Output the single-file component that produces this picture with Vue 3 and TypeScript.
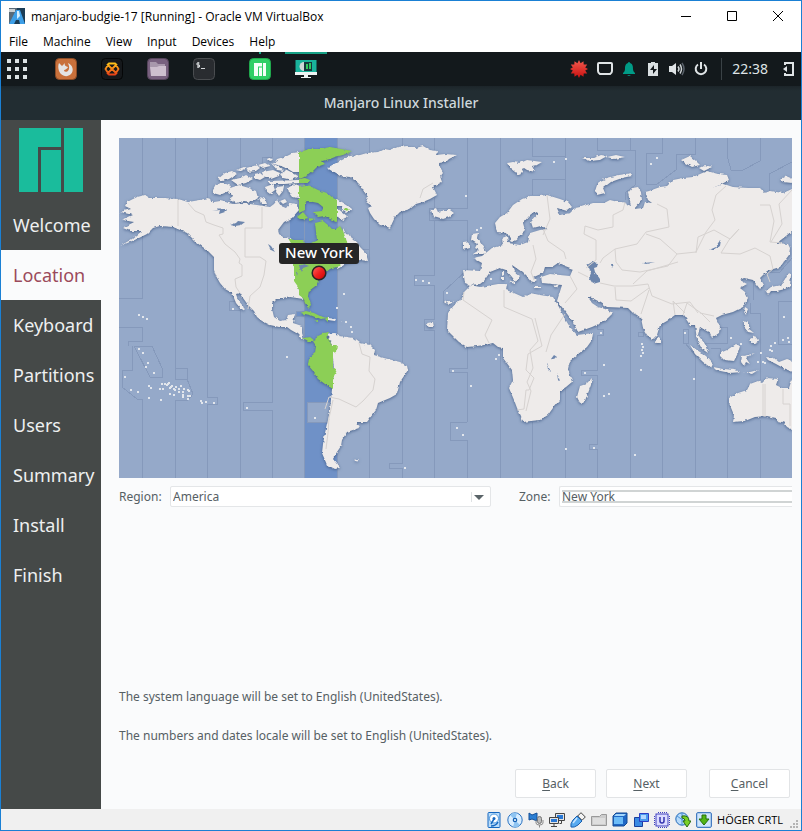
<script setup lang="ts">
import { ref } from 'vue'

interface Dot { x: number; y: number }

const menus: string[] = ['File', 'Machine', 'View', 'Input', 'Devices', 'Help']
const steps: string[] = ['Welcome', 'Location', 'Keyboard', 'Partitions', 'Users', 'Summary', 'Install', 'Finish']
const current = ref('Location')
const region = ref('America')
const zone = ref('New York')

// Map geometry, in the coordinate space of the map's viewBox.
const land: string[] = [
  // North America
  '120,212 131,209 125,206 127,202 137,197 145,195 150,198 163,198 178,199 188,202 200,200 208,198 214,202 220,201 233,204 243,203 257,205 270,207 274,204 277,200 281,206 286,208 290,203 296,204 299,210 292,218 284,222 278,230 279,234 283,237 291,238 296,262 299,290 303,299 297,298 290,297 283,299 276,299 272,303 272,309 274,317 280,321 286,320 288,315 295,314 293,323 302,326 302,333 304,340 298,334 291,330 287,327 279,327 270,325 262,321 257,317 254,311 248,305 243,298 240,293 236,294 238,300 243,306 245,311 240,308 236,303 232,293 225,289 220,283 216,276 214,270 214,257 207,250 197,243 187,233 173,227 160,226 153,228 147,234 137,239 120,246 132,239 142,231 130,231 123,228 134,222 122,220 133,215',
  '343,228 346,234 350,235 353,240 357,242 360,247 366,253 368,261 360,260 355,262 347,263 341,267 337,269 336,262 345,258',
  // Arctic islands
  '299,152 293,153 287,156 277,159 274,164 281,166 288,169 293,172 299,172',
  '268,158 273,159 271,161 267,160', '258,165 265,163 270,166 263,168',
  '218,179 225,173 232,171 237,174 229,179 222,181', '236,170 244,167 247,168 240,171',
  '231,180 240,178 246,175 253,179 246,183 238,185', '246,168 257,165 260,168 256,171 248,172',
  '254,174 260,173 265,177 260,180 254,178', '262,172 273,170 280,173 279,176 271,179 263,176',
  '271,163 278,166 284,171 277,170', '280,174 287,170 293,173 298,176 292,180 283,178', '268,181 299,180 299,183 284,184 270,184',
  '213,189 216,184 224,183 231,186 229,191 220,195 213,193',
  '230,188 239,185 249,188 256,191 258,198 252,202 244,201 236,203 229,200 234,196 228,193',
  '265,187 273,184 275,190 270,194 266,191', '277,187 284,186 283,191 279,196 276,192', '288,188 294,184 299,186 299,198 292,197 289,193',
  '280,201 285,199 287,202 283,204', '259,197 265,199 267,204 261,204',
  '336,199 342,202 347,205 352,209 346,213 342,210 341,206 336,206', '337,208 342,212 347,216 344,220 339,218 336,214',
  // Greenland, Iceland, Svalbard
  '327,168 334,164 340,161 350,156 360,155 367,153 378,152 384,149 390,150 398,147 407,146 416,148 423,146 430,150 437,151 436,155 445,154 457,155 449,159 446,162 439,163 440,167 443,172 440,176 442,182 433,187 437,195 430,199 423,202 416,204 410,209 400,212 395,217 390,228 385,226 380,225 374,219 370,213 368,208 372,206 366,202 368,197 363,190 361,186 357,182 350,177 340,176',
  '431,210 436,208 438,212 444,210 450,210 454,213 449,217 443,219 437,217 433,216',
  '507,163 513,162 520,163 527,160 542,162 537,165 532,166 535,172 527,170 524,168 520,175 515,172 510,168',
  // British Isles
  '472,234 478,233 477,238 480,242 484,248 487,252 483,254 473,254 479,250 475,248 477,244 471,240',
  '463,243 470,242 470,248 463,250',
  // Eurasia
  '465,283 463,270 480,271 482,263 473,258 482,256 492,248 503,245 502,238 507,236 508,243 520,245 528,242 530,233 540,230 547,229 541,226 533,228 531,222 538,214 534,212 530,215 523,223 525,230 520,235 517,240 512,242 507,233 497,232 495,223 500,217 507,213 513,205 522,199 530,196 540,196 547,195 560,199 568,202 572,207 567,211 557,208 560,215 570,213 575,208 580,207 593,203 604,203 610,200 618,202 623,202 631,206 628,193 632,188 638,187 641,192 642,200 634,209 643,208 645,202 652,203 648,200 645,192 649,191 660,187 667,186 673,180 683,178 693,177 700,174 707,171 718,174 727,175 729,180 720,185 712,188 724,184 733,187 748,188 760,188 765,193 770,191 783,193 792,189 793,230 786,236 777,243 788,244 790,248 789,255 780,267 767,271 760,278 764,285 760,289 756,284 753,280 744,278 740,280 747,284 740,288 745,292 748,298 743,307 733,312 722,315 716,318 720,327 719,333 712,338 710,333 700,327 698,335 705,344 708,353 702,349 697,340 695,325 690,325 686,319 683,315 675,315 667,321 660,325 657,335 652,340 647,335 643,328 641,318 637,315 633,313 628,308 607,307 598,301 592,298 588,297 592,303 598,307 605,309 613,313 608,318 603,322 592,327 578,332 573,322 565,311 557,301 562,285 552,284 542,283 541,277 550,274 560,275 570,276 573,269 565,266 558,263 552,267 545,267 543,273 534,277 537,280 532,283 527,277 522,272 512,265 514,271 520,276 516,282 512,277 506,270 500,268 490,272 484,281 480,284 470,285',
  '595,191 598,182 607,178 619,175 632,173 631,176 622,178 611,182 603,188 605,193 597,195',
  '681,160 690,156 696,161 700,165 692,167 685,163', '699,168 705,165 712,167 704,171', '780,179 786,176 793,179 792,183 783,182',
  '582,158 594,158 601,155 607,156 600,160 590,161', '607,157 616,155 625,157 615,159',
  // Africa and Madagascar
  '470,285 480,287 487,286 498,284 507,284 506,290 514,293 523,297 527,296 530,293 540,295 553,297 559,307 565,319 570,327 577,335 593,333 592,340 587,347 577,355 570,361 568,369 572,382 566,387 560,391 560,400 553,408 548,415 540,420 531,421 523,422 521,416 517,408 514,400 509,388 513,380 512,370 503,358 503,348 498,347 493,343 485,345 478,346 467,347 459,342 452,335 447,330 448,313 455,304 460,300 464,292 469,287',
  '592,378 591,385 587,396 585,402 580,403 577,397 580,386 586,384',
  // South America
  '326,334 334,333 340,336 353,338 360,343 370,345 375,350 374,355 384,358 400,362 407,366 408,370 400,382 397,394 390,398 378,403 376,410 367,422 357,422 359,428 347,432 342,440 341,446 337,452 333,459 340,468 335,469 327,465 322,453 323,444 325,433 328,420 330,410 332,389 334,372 332,345',
  // Oceania and the Pacific rim
  '729,398 738,393 747,390 750,384 758,381 762,383 767,378 778,379 776,385 782,388 789,388 793,376 793,430 787,427 783,421 780,423 776,418 767,416 755,417 745,421 733,422 734,415 729,403',
  '690,345 697,350 706,356 713,364 711,368 703,362 695,354', '713,367 724,369 734,370 741,372 730,373 716,370',
  '720,353 727,350 736,344 740,346 738,353 734,361 724,360 720,356', '742,356 748,355 755,353 746,358 750,364 746,362 744,366 741,362',
  '766,357 774,358 779,362 787,359 793,361 793,372 785,369 776,364 768,360', '743,372 750,372 758,370 752,374',
  '744,320 749,322 749,329 754,333 748,332 744,327', '750,339 755,336 758,340 756,344 751,342', '745,307 748,309 746,314 744,311',
  '766,291 771,287 781,285 785,279 788,273 791,275 790,286 785,289 777,291 771,291 768,295',
  '657,337 660,339 660,343 656,343',
  // Mediterranean islands, Caribbean, Falklands
  '502,271 504,271 504,275 502,276', '501,277 504,277 504,280 501,280', '509,282 515,281 515,284', '534,287 541,287 541,288 534,288', '554,286 559,284 557,288',
  '328,318 336,319 335,321 328,320', '338,321 342,321 340,322', '353,460 359,459 357,462', '444,302 449,301 454,301 450,304 445,303', '427,323 433,322 434,327 429,327',
]

const zoneLand: string[] = [
  '299,152 310,149 320,149 330,147 341,149 352,151 343,155 335,157 330,159 322,161 325,164 317,167 313,171 308,175 302,178 299,177',
  '299,179 305,178 310,180 309,183 299,183',
  '299,186 307,185 314,188 318,190 327,193 333,198 337,200 337,222 330,219 325,216 318,217 313,212 322,211 323,207 318,203 308,201 305,203 305,210 299,213',
  '297,217 303,212 308,218 301,220', '309,218 315,219 310,221',
  '315,223 323,221 328,225 332,229 336,229 340,226 343,231 346,239 348,245 346,257 340,266 330,269 325,273 320,278 318,284 309,291 308,296 311,305 308,308 305,303 303,298 299,295 299,288 294,281 294,267 292,256 292,245 288,238 294,240 303,240 308,248 311,243 317,240 316,232',
  '300,313 306,311 314,313 322,317 327,318 320,319 310,315', '314,321 318,320 318,322', '325,319 328,317 328,322',
  '303,338 310,337 315,341 316,337 320,335 324,333 329,332 327,338 332,345 337,345 336,352 333,353 333,367 337,370 333,378 333,389 325,384 318,379 313,371 308,365 309,358 315,353 316,346 313,341 308,341',
  '343,209 347,208 349,210 344,211',
]

const lakes: string[] = [
  '587,265 592,262 598,263 597,267 594,268 595,272 600,279 600,282 593,284 589,278 591,273',
  '212,211 217,210 219,208 222,209 228,209 225,212 219,214 220,210',
  '230,225 236,223 238,221 245,222 241,225 235,226', '268,244 271,246 275,252 271,250',
  '554,355 557,357 554,360 551,359', '547,362 549,368 551,372 548,370', '557,373 560,381 558,380',
  '709,250 716,247 721,240 720,246 714,250', '643,263 655,262 646,264', '611,264 614,264 612,268',
  '298,266 304,264 309,266 303,268 302,272 300,268', '296,271 298,272 297,276',
]

const borders: string[] = [
  'M178 199V226', 'M188 203l7 8 9 4 2 7 8 3 9 3v6l-4 1 6 9 10 8 5 7-1 4 3 2v11l-7 3 1 8 4 6',
  'M262 207V228H245V257h15l6 4-2 14-4 12-10 9-2 13',
  'M433 183l-10 6-3 9', 'M464 292l-1 8 29 20-7 15 4 8', 'M504 290v17l28 12 6 22-8 9 3 18-6 14 4 9-5 20',
  'M535 318l7 28-14 8-2 16 8 8-5 12h-3l-2 19-7 1', 'M547 195l3 24-7 16', 'M533 245l3 14-5 13 3 8',
  'M543 229l5 12 16 11 2 7',
  'M625 202l-2 8-10 5v12l-15 3-13-4-1 8 12 6v20l-10 8', 'M600 263l3-5 12-9 22-5 9-12 23-5-2-18-10-5', 'M646 234l14 5 17 15-9 12-28 6-18-2-6-8-1-13',
  'M677 254l19-2 10-20 9-12-3-10 4-15 10-9', 'M696 253l2-16 16-7 16 9 9-10-10 11-8 13 19 1 15-6 15 8 3 13-6 5 3 8',
  'M760 205l10 0 4 16-4 21 12 1', 'M792 190l-13 14 3 20-11 18', 'M578 272l10 5M570 276l7 13-12 14M600 283l14 3 18 0 16-2 4 12 20 8 18-2 8 11',
  'M615 287l1 13 15 1 18-13', 'M641 314l8-24M675 315l-2-14 12 12M683 315l4-12 14 10 9 9M700 313l14 3', 'M633 284l14-13 31-9',
  'M359 343l3 11 8 3-1 14 6 8-2 11-10 11-7 6-17-8-10-2-4 12', 'M333 400l-4 18-1 15-2 16', 'M763 384V416M765 384V417', 'M783 389v15h7v22', 'M565 314l-14 21-5 17',
]

const zoneLines: string[] = [
  'M142 138V298H119', 'M119 327H142V341H128V346', 'M134 346H152L162 368V377H150Z', 'M132 346V370H122V387L137 399H142V478',
  'M175 138V368H187V379L193 394L188 400H175V478', 'M175 368V379H187', 'M207 138V397H217V404H207V478', 'M240 138V170', 'M239 301H229V310H240V478',
  'M272 138V157H262V164', 'M272 325V402H243V410H272V478', 'M369 138V478M362 249H369', 'M402 138V463H389V468H402V478',
  'M434 138V208M434 220V275H414V285H434V319H424V330H434V478', 'M467 138V208H429V220H467V270L443 292V302H455',
  'M467 347V368H449V372H467V422M467 422H450V440H467V478', 'M500 138V218M500 348V478', 'M532 138V156H565M565 179H532V195M532 422V478', 'M565 138V201M565 388V478',
  'M597 138V150H635V185L625 193V200', 'M597 310V329H603V335H597V370H581V375H597V444H589V449H597V478', 'M630 138V150M630 310V478',
  'M662 138V153H646V184H657L676 170V154H695V138', 'M662 325V478', 'M683 329H688V343H683ZM685 343L695 355V478', 'M727 138V155L731 170H743L760 161V138',
  'M727 372V478M720 327H727V343H697', 'M750 303V313H760V380M760 420V478', 'M769 195V174L792 162', 'M792 301H778V344H792', 'M753 300V282M765 272H780L792 258', 'M638 332H643V336H638Z', 'M711 348H720V353',
]

const toDots = (list: string): Dot[] =>
  list.split(' ').map((pair) => {
    const [x, y] = pair.split(',').map(Number)
    return { x, y }
  })

const islets = toDots(
  '138,314 142,316 146,318 138,348 142,352 147,362 145,366 153,372 124,376 130,389 137,391 148,385 150,387 148,397 160,399 161,383 164,383 166,384 168,382 170,386 159,388 162,388 167,383 169,387 171,385 173,388 175,386 174,389 178,388 180,385 183,388 178,391 182,391 182,394 187,389 188,390 187,395 189,395 187,398 182,396 169,393 173,394 200,400 201,402 205,401 213,402 246,407 286,356 314,417 232,308 343,293 415,279 422,280 428,282 446,292 452,370 470,385 456,427 462,434 404,467 498,354 495,358 565,448 593,447 634,454 693,378 640,369 603,364 608,393 603,395 584,372 600,332 641,343 642,346 641,349 642,352 640,355 490,278 476,229 480,227 465,195 783,316 782,339 787,337 788,341 774,342 770,345 769,349 771,350 757,361 762,361 764,362 751,341 730,337 740,343 336,307 345,321 350,326 351,331 565,158 553,161 656,157 650,163 684,332 760,352',
)

const devices: string[] = ['disk', 'optical', 'audio', 'network', 'usb', 'folders', 'display', 'recording', 'cpu', 'mouse', 'keyboard']
</script>

<template>
  <div class="window">
    <header class="titlebar">
      <svg class="app-icon" viewBox="0 0 16 16" aria-hidden="true">
        <rect width="16" height="16" fill="#1b3d57" />
        <path d="M0 0h8L5 16H0z" fill="#596a78" />
        <path d="M0 1h6v3H0z" fill="#c9d0d4" />
        <path d="M7 2h4l5 14h-5l-1-4H7l-2 4H0z" fill="#3d9fe8" />
        <path d="M8 3h2l1 5-3 3z" fill="#d4efff" />
      </svg>
      <h1 class="title">manjaro-budgie-17 [Running] - Oracle VM VirtualBox</h1>
      <div class="controls">
        <button type="button" aria-label="Minimize"><svg viewBox="0 0 10 10"><path d="M0 5.500h10" /></svg></button>
        <button type="button" aria-label="Maximize"><svg viewBox="0 0 10 10"><path d="M.5.5h9v9h-9z" /></svg></button>
        <button type="button" aria-label="Close"><svg viewBox="0 0 10 10"><path d="M0 0l10 10M10 0L0 10" /></svg></button>
      </div>
    </header>

    <nav class="menubar">
      <button v-for="m in menus" :key="m" type="button">{{ m }}</button>
    </nav>

    <div class="panel">
      <button class="launcher" type="button" aria-label="Applications">
        <svg viewBox="0 0 20 20" width="20" height="20"><path d="M0 0h4v4H0zM8 0h4v4H8zM16 0h4v4h-4zM0 8h4v4H0zM8 8h4v4H8zM16 8h4v4h-4zM0 16h4v4H0zM8 16h4v4H8zM16 16h4v4h-4z" fill="#dce3e5" /></svg>
      </button>
      <button class="app" type="button" aria-label="Firefox">
        <svg viewBox="0 0 22 22"><rect x=".5" y=".5" width="21" height="21" rx="4" fill="#c9713c" stroke="#8c4c26" /><path d="M4 5l3 3 3-3c-1 3 1 3 3 4-1 3-4 2-4 4 2 2 6 0 5-5l-1-3c5 2 6 8 3 11-4 4-10 2-12-3-1-3-1-6 0-8z" fill="#e4e4e4" /></svg>
      </button>
      <button class="app" type="button" aria-label="Media player">
        <svg viewBox="0 0 22 22"><defs><linearGradient id="fire" x2="0" y2="1"><stop stop-color="#ffc21a" /><stop offset="1" stop-color="#e84218" /></linearGradient></defs><rect x=".5" y=".5" width="21" height="21" rx="4" fill="#15181b" stroke="#050607" /><path d="M8 5.500h6l3.500 5.500-3.500 5.500H8L4.500 11zM6 6l10 10M16 6L6 16" fill="none" stroke="url(#fire)" stroke-width="1.800" /></svg>
      </button>
      <button class="app" type="button" aria-label="Files">
        <svg viewBox="0 0 22 22"><rect x=".5" y=".5" width="21" height="21" rx="4" fill="#78617f" stroke="#55445b" /><path d="M3 4h6l2 2h7v3H3z" fill="#a898ac" /><path d="M3 9h7l2-1h7v10H4z" fill="#cdbfce" /></svg>
      </button>
      <button class="app" type="button" aria-label="Terminal">
        <svg viewBox="0 0 22 22"><rect x=".5" y=".5" width="21" height="21" rx="4" fill="#292c30" stroke="#4a4d50" /><path d="M6.500 5H4v2h2.500v2H4M5.200 4v6M8 10.500h4" fill="none" stroke="#d5d8da" /></svg>
      </button>
      <button class="app running" type="button" aria-label="Manjaro Hello">
        <svg viewBox="0 0 22 22"><rect x=".5" y=".5" width="21" height="21" rx="4" fill="#2fcf66" stroke="#20a94d" /><path d="M5 5h8v3.500H9V18H5zM10 9.500h3V18h-3zM14 5h3v13h-3z" fill="#f3fff7" /></svg>
      </button>
      <button class="app active" type="button" aria-label="Manjaro Linux Installer">
        <svg viewBox="0 0 22 22"><path d="M.5 2h21v12H.5z" fill="#19b29b" /><path d="M0 14h22v3H0zM9 17h4v2h3v1H6v-1h3z" fill="#eef3f3" /><circle cx="9" cy="8.500" r="4.500" fill="#cfd6d6" /><path d="M9 4h8v9H9z" fill="#17363d" /><path d="M11 6h2v5h-2zM14 5h2v6h-2z" fill="#2fc85d" /></svg>
      </button>
      <div class="tray">
        <button class="wide" type="button" aria-label="Updates">
          <svg viewBox="0 0 18 18"><defs><linearGradient id="red" x2="0" y2="1"><stop stop-color="#f25a4e" /><stop offset="1" stop-color="#c91010" /></linearGradient></defs><path d="M9 0l1.600 3.200L13.500 1.200l.2 3.300 3.500.1L15.200 7.400 18 9l-2.800 1.600 2 2.800-3.500.1-.2 3.300-2.900-2L9 18l-1.600-3.200-2.900 2-.2-3.300-3.500-.1 2-2.800L0 9l2.800-1.600-2-2.800 3.500-.1.2-3.300 2.900 2z" fill="url(#red)" /></svg>
        </button>
        <button type="button" aria-label="Display"><svg viewBox="0 0 16 16"><path d="M2 2h12q1 0 1 1v7q0 2-2 3H3q-2-1-2-3V3q0-1 1-1z" fill="none" stroke="#dfe4e6" stroke-width="2" /></svg></button>
        <button type="button" aria-label="Notifications"><svg viewBox="0 0 16 16"><path d="M8 1c1 0 1 1 1 1 3 1 3 4 3 6 0 2 1 3 2 4v1H2v-1c1-1 2-2 2-4 0-2 0-5 3-6 0 0 0-1 1-1zM6 14h4l-2 1z" fill="#009b86" /></svg></button>
        <button type="button" aria-label="Battery"><svg viewBox="0 0 16 16"><path d="M6 1h4v1h3v13H3V2h3z" fill="#d9dfe1" /><path d="M9 4L5 9h3v4l4-5H9z" fill="#12181b" /></svg></button>
        <button type="button" aria-label="Volume"><svg viewBox="0 0 16 16"><path d="M0 5h3l4-3v12l-4-3H0z" fill="#dfe4e6" /><path d="M9 5.500q2 2.500 0 5M11 3.500q3 4.500 0 9" fill="none" stroke="#cfd5d7" stroke-width="1.500" /><path d="M13 2q4 6 0 12" fill="none" stroke="#59616a" stroke-width="1.500" /></svg></button>
        <button type="button" aria-label="Power"><svg viewBox="0 0 16 16"><path d="M8 1v7M5 3.500a5.300 5.300 0 1 0 6 0" fill="none" stroke="#dfe4e6" stroke-width="2" /></svg></button>
        <time class="clock">22:38</time>
        <button class="raven" type="button" aria-label="Sidebar"><svg viewBox="0 0 12 16"><path d="M2 4V2h8v12H2v-2" fill="none" stroke="#dfe4e6" stroke-width="2" /><path d="M0 8l4-3v6z" fill="#dfe4e6" /></svg></button>
      </div>
    </div>

    <div class="header">Manjaro Linux Installer</div>

    <div class="installer">
      <aside class="sidebar">
        <svg class="logo" viewBox="0 0 64 64" role="img" aria-label="Manjaro"><path d="M0 0h42v19H19v45H0zM22 22h20v42H22zM45 0h19v64H45z" fill="#1abc9c" /></svg>
        <ol class="steps">
          <li v-for="s in steps" :key="s" :class="{ current: s === current }">{{ s }}</li>
        </ol>
      </aside>

      <main class="content">
        <svg class="map" viewBox="119 138 673 340" role="img" aria-label="Time zone map">
          <defs>
            <filter id="coast" x="0" y="0" width="100%" height="100%" color-interpolation-filters="sRGB">
              <feTurbulence type="fractalNoise" baseFrequency="0.25" numOctaves="2" seed="7" result="noise" />
              <feDisplacementMap in="SourceGraphic" in2="noise" scale="3" xChannelSelector="R" yChannelSelector="G" result="shape" />
              <feDropShadow in="shape" dx="0" dy="1" stdDeviation="1.500" flood-color="#3b5580" flood-opacity="0.8" />
            </filter>
            <linearGradient id="pin" x2="1" y2="1"><stop stop-color="#ff6a63" /><stop offset=".5" stop-color="#ee2020" /><stop offset="1" stop-color="#c50000" /></linearGradient>
          </defs>
          <rect x="119" y="138" width="673" height="340" fill="#95a9c9" />
          <path d="M304 138h33v340h-33zM290 212h14v28h-14zM296 311h8v5h-8z" fill="#6f91c7" />
          <path d="M307 402h25v20h-25z" fill="#95a9c9" class="zone-line" />
          <path d="M304 138V478M337 138V478M296 311h8v5h-8z" class="zone-line" />
          <path v-for="(d, i) in zoneLines" :key="i" :d="d" class="zone-line" />
          <g filter="url(#coast)">
            <rect x="119" y="138" width="673" height="340" fill="none" />
            <polygon v-for="(p, i) in land" :key="'l' + i" :points="p" fill="#eeebea" />
            <polygon v-for="(p, i) in zoneLand" :key="'z' + i" :points="p" fill="#8ccf56" />
            <polygon v-for="(p, i) in lakes" :key="'k' + i" :points="p" fill="#6d86ad" />
          </g>
          <path v-for="(d, i) in borders" :key="'b' + i" :d="d" class="border" />
          <rect v-for="(d, i) in islets" :key="'d' + i" :x="d.x" :y="d.y" width="2" height="2" fill="#e2e6ec" />
          <circle cx="328" cy="337" r="1.500" fill="#5c7396" />
          <circle cx="319" cy="273" r="6.800" fill="url(#pin)" stroke="#2b2424" stroke-width="1.500" />
          <rect x="279" y="243" width="80" height="21" rx="3" fill="#262626" />
          <text x="319" y="258" class="map-label">New York</text>
        </svg>

        <form class="place" @submit.prevent>
          <label for="region">Region:</label>
          <div class="region-box">
            <select id="region" v-model="region"><option>America</option><option>Europe</option></select>
            <svg class="arrow" viewBox="0 0 16 12" aria-hidden="true"><path d="M1.500 1v10" stroke="#dfe2e4" /><path d="M4 4h10L9 9z" fill="#5a6468" /></svg>
          </div>
          <label class="zone-label" for="zone">Zone:</label>
          <select id="zone" v-model="zone"><option>New York</option><option>Chicago</option></select>
        </form>

        <p class="note first">The system language will be set to English (UnitedStates).</p>
        <p class="note">The numbers and dates locale will be set to English (UnitedStates).</p>

        <div class="actions">
          <button type="button"><u>B</u>ack</button>
          <button type="button"><u>N</u>ext</button>
          <button class="cancel" type="button"><u>C</u>ancel</button>
        </div>
      </main>
    </div>

    <footer class="statusbar">
      <svg v-for="d in devices" :key="d" class="device" viewBox="0 0 16 16" role="img" :aria-label="d">
        <g v-if="d === 'disk'"><rect x="2" y=".5" width="12" height="15" rx="1" fill="#b9dcfa" stroke="#1567c0" /><circle cx="8" cy="6.500" r="4.500" fill="#fff" stroke="#4d97dd" /><circle cx="8" cy="6.500" r="1.500" fill="#1567c0" /><path d="M8 7l-3 5M5 14q5 0 7-4" stroke="#1567c0" stroke-width="1.500" fill="none" /></g>
        <g v-else-if="d === 'optical'"><circle cx="8" cy="8" r="7.200" fill="#d8edff" stroke="#2a72c0" /><path d="M8 8L3 3q3-3 7-2zM8 8l5 5q-3 3-7 2z" fill="#8ec4f2" /><circle cx="8" cy="8" r="2.300" fill="#1461b4" /><circle cx="8" cy="8" r="1" fill="#fff" /></g>
        <g v-else-if="d === 'audio'"><path d="M1 1l3 2 5-2v8L4 7 1 8z" fill="#2b7fd4" stroke="#144f96" /><rect x="9.500" y="4.500" width="4" height="7" rx="2" fill="#bbb" stroke="#777" /><path d="M8 8v3q0 2 3.500 2T15 11V8M11.500 13v2.500" fill="none" stroke="#8b8b8b" /></g>
        <g v-else-if="d === 'network'"><path d="M6.500 1.500h9v7h-9z" fill="#e4e4e4" stroke="#444" /><path d="M8 3h6v4H8z" fill="#2878d6" /><path d="M.5 5.500h9v6h-9z" fill="#e4e4e4" stroke="#444" /><path d="M2 7h6v3H2z" fill="#2878d6" /><path d="M5 12v2M2 14.500h6M12.500 9v2.500h-2" fill="none" stroke="#444" /></g>
        <g v-else-if="d === 'usb'"><path d="M11 .7L15.300 5 12 8.300 7.700 4z" fill="#f4f4f4" stroke="#444" /><path d="M7 4l5 5-4 4q-4 3-7 2-1-3 2-7z" fill="#57aaf0" stroke="#1a5fae" /><path d="M7 6L3 11" stroke="#c9e6ff" stroke-width="1.500" /></g>
        <g v-else-if="d === 'folders'"><path d="M.5 4.500h8l2-2h5v11H.5z" fill="#ccc" stroke="#999" /><path d="M2 6h12v6H2z" fill="#dedede" /></g>
        <g v-else-if="d === 'display'"><path d="M1 4l3-3h11v10l-3 3H1z" fill="#1f67c5" stroke="#144b94" /><path d="M2 5h9v7H2z" fill="#6cbcf8" /><path d="M4 2h10l-2 2H2z" fill="#a3d6fc" /></g>
        <g v-else-if="d === 'recording'"><path d="M1.500 5.500h8v9h-8z" fill="#3b8be4" stroke="#183f9a" /><path d="M6.500 1.500h9v8h-9z" fill="#4b9bee" stroke="#2b3ec4" /><path d="M8 3h5v4H8z" fill="#b4d8ff" /></g>
        <g v-else-if="d === 'cpu'"><rect x="2" y="2" width="12" height="12" fill="#dcdcff" stroke="#4040c0" /><path d="M4 .5h9M4 15.500h9M.5 4v9M15.500 4v9" stroke="#4040c0" stroke-dasharray="1 1" /><path d="M6 5v4q0 2 2 2t2-2V5" fill="none" stroke="#3434b0" stroke-width="1.500" /></g>
        <g v-else-if="d === 'mouse'"><circle cx="7" cy="7" r="6.200" fill="#b6dafa" stroke="#2068b8" /><path d="M2 4l10 7M7 1v12" stroke="#4d92d6" /><path d="M7 4q7-1 7 5h2l-4 6-4-6h2q0-3-3-3z" fill="#7ad028" stroke="#286b12" /></g>
        <g v-else><rect x=".7" y=".7" width="14.600" height="14.600" rx="1" fill="#cfe5fb" stroke="#1c5fb4" /><path d="M6 3h4v4h3l-5 6-5-6h3z" fill="#52b515" stroke="#246f0b" /></g>
      </svg>
      <span class="host-key">HÖGER CRTL</span>
      <svg class="grip" viewBox="0 0 8 8" aria-hidden="true"><path d="M6 0h2v2H6zM3 3h2v2H3zM6 3h2v2H6zM0 6h2v2H0zM3 6h2v2H3zM6 6h2v2H6z" fill="#b4b4b4" /></svg>
    </footer>
  </div>
</template>

<style>
body {
  margin: 0;
}
</style>

<style scoped>
.window {
  box-sizing: border-box;
  min-height: 100vh;
  display: flex;
  flex-direction: column;
  border: 1px solid #1a80d4;
  background: #fafbfc;
  font-family: "Noto Sans", sans-serif;
  font-size: 12px;
  color: #566064;
}
button,
select {
  font: inherit;
  color: inherit;
}
button {
  padding: 0;
  border: 0;
  background: none;
}
.titlebar {
  display: flex;
  align-items: center;
  height: 30px;
  padding-left: 8px;
  background: #fff;
}
.app-icon {
  width: 16px;
  height: 16px;
}
.title {
  flex: 1;
  margin: 0 0 0 6px;
  font: 12px "Open Sans", sans-serif;
  color: #000;
  white-space: nowrap;
}
.controls {
  display: flex;
}
.controls button {
  display: grid;
  place-items: center;
  width: 46px;
  height: 28px;
}
.controls svg {
  width: 10px;
  height: 10px;
  fill: none;
  stroke: #000;
}
.menubar {
  display: flex;
  gap: 15px;
  height: 21px;
  padding-left: 8px;
  background: #fff;
  font: 12px "Open Sans", sans-serif;
  color: #000;
}
.panel {
  display: flex;
  align-items: stretch;
  height: 34px;
  background: #13191c;
}
.panel button {
  display: grid;
  place-items: center;
}
.launcher {
  width: 32px;
  margin-right: 10px;
}
.app {
  position: relative;
  width: 46px;
}
.app svg {
  width: 22px;
  height: 22px;
}
.running {
  margin-left: 10px;
}
.running::before,
.active::before {
  content: "";
  position: absolute;
  top: 0;
  left: 22px;
  width: 2px;
  height: 2px;
  background: #16a085;
}
.active::before {
  left: 2px;
  width: 42px;
}
.tray {
  display: flex;
  align-items: center;
  margin-left: auto;
  padding-right: 6px;
}
.tray button {
  width: 24px;
}
.tray svg {
  width: 16px;
  height: 16px;
}
.tray .wide {
  width: 28px;
}
.tray .wide svg {
  width: 18px;
  height: 18px;
}
.clock {
  margin-left: 8px;
  padding-left: 10px;
  border-left: 1px solid #3a4246;
  color: #dfe4e6;
  font-size: 14px;
  line-height: 22px;
}
.tray .raven {
  width: 12px;
  margin-left: 15px;
}
.tray .raven svg {
  width: 12px;
}
.header {
  height: 34px;
  background: linear-gradient(#1c2529, #222d32 5px);
  color: #cfd8dc;
  font-size: 14px;
  font-weight: 500;
  line-height: 34px;
  text-align: center;
}
.installer {
  flex: 1;
  display: flex;
}
.sidebar {
  flex: none;
  width: 100px;
  padding-top: 8px;
  background: #454948;
}
.logo {
  display: block;
  width: 64px;
  height: 64px;
  margin: 0 auto 8px;
}
.steps {
  margin: 0;
  padding: 0;
  list-style: none;
  color: #eef0f0;
  font-size: 18px;
  line-height: 50px;
}
.steps li {
  padding-left: 12px;
}
.steps .current {
  background: #fafbfc;
  color: #9b4a5b;
}
.content {
  flex: 1;
  min-width: 0;
  display: flex;
  flex-direction: column;
  padding: 18px 9px 11px 18px;
}
.map {
  display: block;
  width: 100%;
}
.zone-line {
  stroke: #8599bb;
  stroke-width: 1;
  shape-rendering: crispEdges;
}
path.zone-line:not([fill]) {
  fill: none;
}
.border {
  fill: none;
  stroke: #d6d2d0;
  stroke-width: 1;
  stroke-linejoin: round;
}
.map-label {
  fill: #fff;
  font-size: 15px;
  font-weight: 500;
  text-anchor: middle;
}
.place {
  display: grid;
  grid-template-columns: 51px 321fr 68px 233fr;
  align-items: center;
  margin-top: 8px;
}
.place .zone-label {
  padding-left: 28px;
}
.region-box {
  display: grid;
  align-items: center;
}
.region-box > * {
  grid-area: 1 / 1;
}
.place select {
  box-sizing: border-box;
  min-width: 0;
  height: 21px;
  padding: 0 2px;
  border: 1px solid #e4e6e8;
  border-radius: 2px;
  background: #fff;
  appearance: none;
}
.arrow {
  justify-self: end;
  width: 16px;
  height: 12px;
  margin-right: 5px;
  pointer-events: none;
}
.place #zone {
  border-right: 0;
  border-radius: 2px 0 0 2px;
  background:
    linear-gradient(#d0d4d4, #d0d4d4) 2px 3px / 100% 2px no-repeat,
    linear-gradient(#d0d4d4, #d0d4d4) 2px 14px / 100% 2px no-repeat,
    #fff;
}
.note {
  margin: 0 0 19px;
  line-height: 20px;
}
.note.first {
  margin-top: auto;
}
.actions {
  display: flex;
  justify-content: flex-end;
  gap: 10px;
  margin-top: 4px;
  padding-right: 2px;
}
.actions button {
  box-sizing: border-box;
  width: 81px;
  height: 29px;
  border: 1px solid #e2e4e6;
  border-radius: 2px;
  background: #fff;
}
.actions u {
  text-underline-offset: 2px;
}
.actions .cancel {
  margin-left: 12px;
}
.statusbar {
  display: flex;
  align-items: center;
  justify-content: flex-end;
  gap: 5px;
  height: 21px;
  background: #f0f0f0;
  color: #000;
}
.device {
  width: 16px;
  height: 16px;
}
.host-key {
  font: 11px "Open Sans", sans-serif;
}
.grip {
  align-self: flex-end;
  width: 8px;
  height: 8px;
  margin: 0 3px 2px 2px;
}
</style>
